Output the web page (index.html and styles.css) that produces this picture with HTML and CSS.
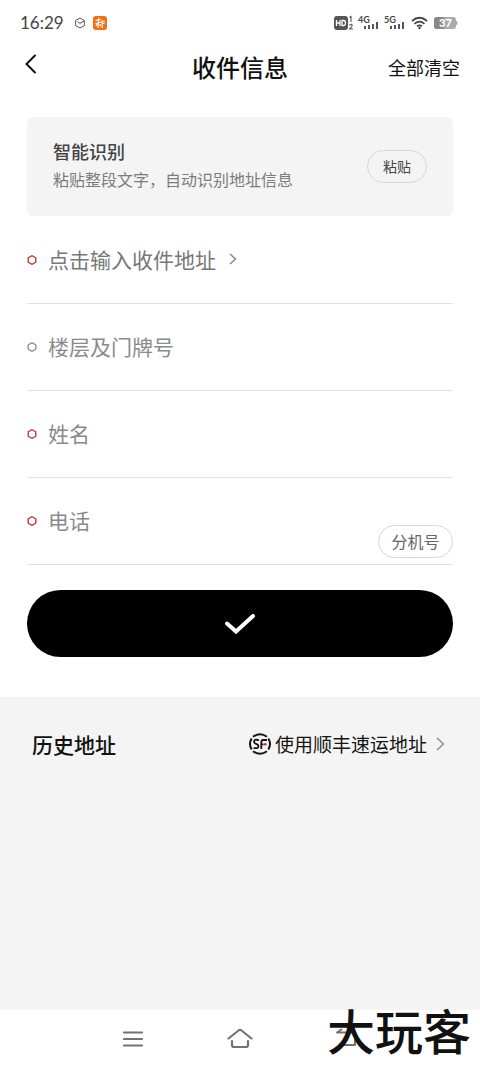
FILE: index.html
```html
<!DOCTYPE html>
<html lang="zh-CN">
<head>
<meta charset="utf-8">
<meta name="viewport" content="width=device-width, initial-scale=1">
<title>收件信息</title>
<link rel="stylesheet" href="styles.css">
</head>
<body>
<div class="status">
  <time class="clock">16:29</time>
  <svg class="status-hex" width="12" height="12" viewBox="0 0 12 12" fill="none" stroke="#555" stroke-width="1"><path d="M6 1 10.400 3.500V8.500L6 11 1.600 8.500V3.500Z"/><path d="M3.500 4.800 6 6.300 10 4"/></svg>
  <svg class="status-app" width="14" height="14" viewBox="0 0 14 14"><rect width="14" height="14" rx="3" fill="#f4700f"/><g fill="none" stroke="#fff" stroke-width="1.200" stroke-linecap="round"><path d="M3 4.500 7.500 3.500M5.500 2.300V6M3 7.500 8 6M5.500 6 5 11.500M3.200 9.500 4 8.500M7 8.500 7.300 10M9.200 4.500V11.500M9.200 7.500H11M11 5V6"/></g></svg>
  <svg class="status-right" width="127" height="18" viewBox="0 0 127 18" font-family="Lato, sans-serif" font-weight="700">
    <rect x="1" y="2" width="14" height="14" rx="3" fill="#555"/>
    <path d="M3.500 6V12M7 6V12M3.500 9H7M9 6.500H10.500Q12.500 6.500 12.500 9T10.500 11.500H9Z" fill="none" stroke="#fff" stroke-width="1.300"/>
    <path d="M16.500 3.500 18 2.500V8M16.500 11.500Q17 10 18.300 10.300Q19.800 11 18.500 12.800L16.500 15H20" fill="none" stroke="#555" stroke-width="1.100"/>
    <g fill="#444" font-size="9"><text x="25" y="9">4G</text><text x="51" y="9">5G</text></g>
    <path fill="#555" d="M31 12h2v3h-2zM35 11h2v4h-2zM39 10h2v5h-2zM43 8h2v7h-2zM57 12h2v3h-2zM61 11h2v4h-2zM65 10h2v5h-2zM69 8h2v7h-2z"/>
    <g fill="none" stroke="#444" stroke-width="1.700"><path d="M79 7Q86.500 .5 94 7M81.500 9.800Q86.500 5.500 91.500 9.800M84 12.300Q86.500 10.500 89 12.300"/></g><circle cx="86.500" cy="14" r="1.200" fill="#444"/>
    <rect x="101" y="3" width="22" height="12" rx="3" fill="#aaa"/><path d="M104 3H111V15H104a3 3 0 0 1-3-3V6a3 3 0 0 1 3-3Z" fill="#888"/><path d="M123 7h1q1 2 0 4h-1z" fill="#aaa"/>
    <text x="106" y="13" font-size="11" font-weight="900" fill="#fff">37</text>
  </svg>
</div>

<header class="header">
  <button class="back" type="button" aria-label="返回"><svg width="12" height="20" viewBox="0 0 12 20" fill="none" stroke="#111" stroke-width="2" stroke-linecap="round" stroke-linejoin="round"><path d="M10 1.500 1.500 10 10 18.500"/></svg></button>
  <h1 class="title">收件信息</h1>
  <button class="clear" type="button">全部清空</button>
</header>

<main class="main">
  <section class="smart">
    <div class="smart-text">
      <h2 class="smart-title">智能识别</h2>
      <p class="smart-hint">粘贴整段文字，自动识别地址信息</p>
    </div>
    <button class="pill paste" type="button">粘贴</button>
  </section>

  <form class="form">
    <div class="row">
      <svg class="mark required" viewBox="0 0 10 10"><path d="M5 .7 8.800 2.800V7.200L5 9.300 1.200 7.200V2.800Z"/></svg>
      <button class="address" type="button">点击输入收件地址<svg width="8" height="12" viewBox="0 0 8 12" fill="none" stroke="#888" stroke-width="1.500"><path d="M1 1 6.500 6 1 11"/></svg></button>
    </div>
    <div class="row">
      <svg class="mark" viewBox="0 0 10 10"><path d="M5 .7 8.800 2.800V7.200L5 9.300 1.200 7.200V2.800Z"/></svg>
      <input class="field" type="text" placeholder="楼层及门牌号" aria-label="楼层及门牌号">
    </div>
    <div class="row">
      <svg class="mark required" viewBox="0 0 10 10"><path d="M5 .7 8.800 2.800V7.200L5 9.300 1.200 7.200V2.800Z"/></svg>
      <input class="field" type="text" placeholder="姓名" aria-label="姓名">
    </div>
    <div class="row">
      <svg class="mark required" viewBox="0 0 10 10"><path d="M5 .7 8.800 2.800V7.200L5 9.300 1.200 7.200V2.800Z"/></svg>
      <input class="field" type="tel" placeholder="电话" aria-label="电话">
      <button class="pill extension" type="button">分机号</button>
    </div>
    <button class="submit" type="submit" aria-label="确认"><svg width="32" height="20" viewBox="0 0 32 20" fill="none" stroke="#fff" stroke-width="4" stroke-linecap="round"><path d="M3 9.500 12 17.500 29 2"/></svg></button>
  </form>
</main>

<section class="history">
  <div class="history-head">
    <h2 class="history-title">历史地址</h2>
    <a class="sf-link" href="#">
      <svg width="22" height="22" viewBox="0 0 22 22" fill="none" stroke="#151515"><g stroke-width="2"><path d="M4 3.800Q11-1.200 18 3.800M4 18.200Q11 23.200 18 18.200M2.600 5.500Q-.6 11 2.600 16.500M19.400 5.500Q22.600 11 19.400 16.500"/></g><g stroke-width="1.800"><path d="M10 7.200Q5 5.800 5 8.800C5 11.300 9.500 10.500 9.500 13.200Q9.500 16 4.500 14.800M12.300 16V9Q12.300 7 14.300 7H18M12.300 11.300H14.500"/></g><circle cx="16.300" cy="11.300" r="1.300" fill="#d51f35" stroke="none"/></svg>
      <span class="sf-label">使用顺丰速运地址</span>
      <svg width="9" height="14" viewBox="0 0 9 14" fill="none" stroke="#888" stroke-width="1.400"><path d="M1 1 7.500 7 1 13"/></svg>
    </a>
  </div>
</section>

<nav class="nav">
  <button class="nav-item" type="button" aria-label="菜单"><svg width="26" height="22" viewBox="0 0 26 22" fill="none" stroke="#727272" stroke-width="2.200" stroke-linecap="round"><path d="M4 4.500H22M4 11H22M4 17.500H22"/></svg></button>
  <button class="nav-item" type="button" aria-label="主页"><svg width="26" height="22" viewBox="0 0 26 22" fill="none" stroke="#727272" stroke-width="2.200" stroke-linecap="round" stroke-linejoin="round"><path d="M1.500 10.500 11.500 2.500Q13 1 14.500 2.500L24.500 10.500M5 13V17Q5 19 7 19H19Q21 19 21 17V13"/></svg></button>
  <button class="nav-item" type="button" aria-label="后退"><svg width="26" height="22" viewBox="0 0 26 22" fill="none" stroke="#727272" stroke-width="2" stroke-linejoin="round"><path d="M8 1 3 4.500H19Q21 4.500 21 6.500V17H8"/></svg></button>
  <span class="watermark">大玩客</span>
</nav>
</body>
</html>
```
FILE: styles.css
```css
* { box-sizing: border-box; }
body {
  margin: 0;
  min-height: 100vh;
  display: flex;
  flex-direction: column;
  background: #fff;
  color: #111;
  font-family: "Noto Sans CJK SC", sans-serif;
}
h1, h2, p { margin: 0; }
button {
  padding: 0;
  border: 0;
  background: none;
  color: inherit;
  font: inherit;
}
svg { display: block; flex: none; }

.status {
  display: flex;
  align-items: center;
  height: 46px;
  padding: 0 20px;
}
.clock { font: 17px/20px Lato, sans-serif; color: #444; }
.status-hex { margin-left: 10px; }
.status-app { margin-left: 7px; }
.status-right { margin-left: auto; }

.header {
  display: grid;
  grid-template-columns: 1fr auto 1fr;
  align-items: center;
  height: 42px;
  padding: 0 20px;
}
.back { justify-self: start; padding: 0 5px 6px; }
.title { font-size: 24px; line-height: 32px; font-weight: 500; }
.clear { justify-self: end; font-size: 18px; line-height: 24px; }

.main { padding: 29px 27px 40px; }
.smart {
  display: flex;
  align-items: center;
  justify-content: space-between;
  height: 99px;
  padding: 0 26px;
  border-radius: 6px;
  background: #f4f4f4;
}
.smart-text { padding-bottom: 4px; }
.smart-title { font-size: 18px; line-height: 28px; font-weight: 500; color: #444; }
.smart-hint { font-size: 16px; line-height: 28px; color: #7c7c7c; }
.pill {
  height: 33px;
  padding-bottom: 2px;
  border: 1px solid #d8d8d8;
  border-radius: 17px;
  color: #444;
}
.paste { width: 60px; font-size: 14px; }

.form { display: flex; flex-direction: column; padding-top: 1px; }
.row {
  display: flex;
  align-items: center;
  gap: 11px;
  height: 87px;
  border-bottom: 1px solid #e2e2e2;
}
.mark {
  width: 10px;
  height: 10px;
  fill: none;
  stroke: #888;
  stroke-width: 1.3;
}
.required { stroke: #c9252d; }
.address {
  display: flex;
  align-items: center;
  gap: 13px;
  padding-bottom: 2px;
  font-size: 21px;
  line-height: 32px;
  color: #777;
}
.field {
  flex: 1;
  min-width: 0;
  height: 34px;
  padding: 0 0 2px;
  border: 0;
  outline: 0;
  background: none;
  font: 21px/32px "Noto Sans CJK SC", sans-serif;
  color: #333;
}
.field::placeholder { color: #8a8a8a; opacity: 1; }
.extension {
  align-self: flex-end;
  width: 75px;
  margin-bottom: 6px;
  font-size: 16px;
  color: #666;
}
.submit {
  display: flex;
  align-items: center;
  justify-content: center;
  height: 67px;
  margin-top: 25px;
  border-radius: 34px;
  background: #000;
}

.history { flex: 1; padding: 31px 35px 32px 32px; background: #f4f4f4; }
.history-head { display: flex; align-items: center; justify-content: space-between; }
.history-title { font-size: 21px; line-height: 32px; font-weight: 500; }
.sf-link {
  display: flex;
  align-items: center;
  gap: 4px;
  color: #151515;
  text-decoration: none;
}
.sf-label { margin-right: 5px; font-size: 19px; line-height: 28px; }

.nav {
  position: relative;
  display: flex;
  align-items: center;
  justify-content: center;
  gap: 81px;
  height: 57px;
}
.watermark {
  position: absolute;
  right: 9px;
  bottom: 14px;
  font-size: 48px;
  line-height: 48px;
  font-weight: 500;
  color: #111;
}
```
